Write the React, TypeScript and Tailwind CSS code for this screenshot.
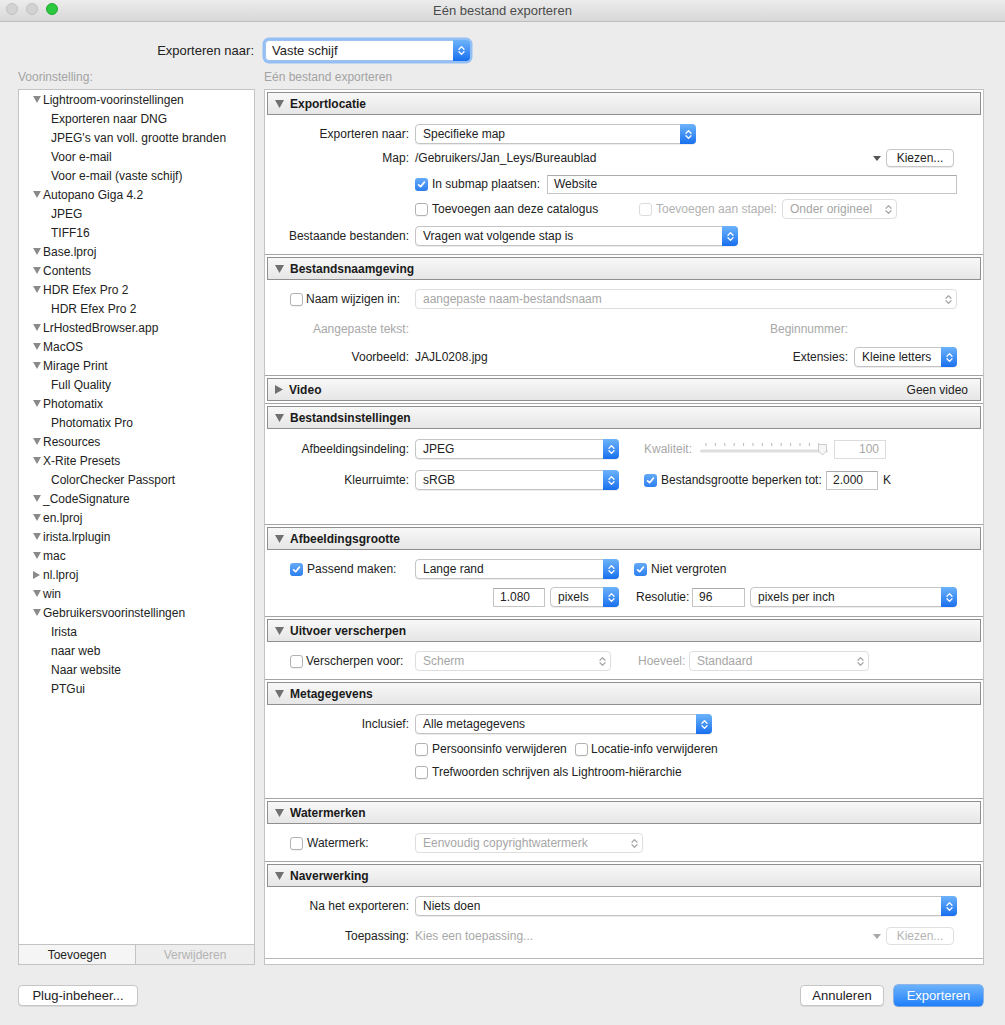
import React from 'react';

const L = 'w-[144px] shrink-0 text-right';

function Chevrons({ color }: { color: string }) {
  return (
    <svg width="7" height="11" viewBox="0 0 7 11">
      <path d="M1 4.2 L3.5 1.6 L6 4.2 M1 6.8 L3.5 9.4 L6 6.8" stroke={color} strokeWidth="1.3" fill="none" strokeLinecap="round" strokeLinejoin="round" />
    </svg>
  );
}

function Select({ w, text, disabled }: { w: string; text: string; disabled?: boolean }) {
  return (
    <div
      className={`${w} h-[20px] shrink-0 flex items-stretch rounded-[4px] border bg-white ${
        disabled ? 'border-[#dedede] text-[#a6a6a6]' : 'border-[#c4c4c4] text-[#222] shadow-[0_1px_0_rgba(0,0,0,0.07)]'
      }`}
    >
      <span className="flex-1 pl-[7px] leading-[18px] truncate">{text}</span>
      {disabled ? (
        <span className="w-[16px] flex items-center justify-center">
          <Chevrons color="#a9a9a9" />
        </span>
      ) : (
        <span className="w-[16px] -my-px -mr-px rounded-r-[4px] bg-linear-to-b from-[#6cb3fb] to-[#166fee] flex items-center justify-center">
          <Chevrons color="#fff" />
        </span>
      )}
    </div>
  );
}

function Check({ checked, disabled }: { checked?: boolean; disabled?: boolean }) {
  if (checked)
    return (
      <span className="w-[13px] h-[13px] shrink-0 rounded-[3px] bg-linear-to-b from-[#63aaf8] to-[#2c7ff0] flex items-center justify-center">
        <svg width="9" height="9" viewBox="0 0 9 9">
          <path d="M1.6 4.8 L3.6 6.7 L7.4 2.1" stroke="#fff" strokeWidth="1.7" fill="none" strokeLinecap="round" strokeLinejoin="round" />
        </svg>
      </span>
    );
  return (
    <span
      className={`w-[13px] h-[13px] shrink-0 rounded-[3px] border bg-white ${
        disabled ? 'border-[#dcdcdc]' : 'border-[#b2b2b2] shadow-[0_1px_0_rgba(0,0,0,0.05)]'
      }`}
    />
  );
}

function Field({ w, value, disabled }: { w: string; value: string; disabled?: boolean }) {
  return (
    <div
      className={`${w} h-[19px] shrink-0 border bg-white px-[6px] leading-[17px] ${
        disabled ? 'border-[#dcdcdc] text-[#a8a8a8] text-right' : 'border-[#c4c4c4] border-t-[#ababab] text-[#222]'
      }`}
    >
      {value}
    </div>
  );
}

function Btn({ w, children, disabled, primary, big }: { w: string; children: React.ReactNode; disabled?: boolean; primary?: boolean; big?: boolean }) {
  const base = `${w} shrink-0 rounded-[4px] flex items-center justify-center`;
  if (primary)
    return (
      <div className={`${base} h-[21px] text-[13px] text-white bg-linear-to-b from-[#6ab2fb] to-[#1c80fa] shadow-[0_0_0_0.5px_#2f7fe8,0_1px_1px_rgba(0,0,0,0.15)]`}>
        {children}
      </div>
    );
  return (
    <div
      className={`${base} ${big ? 'h-[21px] text-[13px]' : 'h-[18px]'} bg-white border ${
        disabled ? 'border-[#e0e0e0] text-[#b4b4b4]' : 'border-[#c6c6c6] text-[#222] shadow-[0_1px_0_rgba(0,0,0,0.08)]'
      }`}
    >
      {children}
    </div>
  );
}

function SmallTri({ gray }: { gray?: boolean }) {
  return (
    <svg width="8" height="5" viewBox="0 0 8 5">
      <polygon points="0,0 8,0 4,5" fill={gray ? '#a8a8a8' : '#555'} />
    </svg>
  );
}

function Tri({ open, size = 9, color = '#707070' }: { open: boolean; size?: number; color?: string }) {
  return open ? (
    <svg width={size} height={size - 1} viewBox="0 0 9 8">
      <polygon points="0,0 9,0 4.5,8" fill={color} />
    </svg>
  ) : (
    <svg width={size - 1} height={size} viewBox="0 0 8 9">
      <polygon points="0,0 8,4.5 0,9" fill={color} />
    </svg>
  );
}

function Section({
  title,
  first,
  open = true,
  extra,
  h,
  last,
  children,
}: {
  title: string;
  first?: boolean;
  open?: boolean;
  extra?: string;
  h?: string;
  last?: boolean;
  children?: React.ReactNode;
}) {
  return (
    <div className={`${first ? '' : 'border-t border-[#a4a4a4]'} pt-[2px] shrink-0 ${last ? 'flex-1 flex flex-col' : ''}`}>
      <div className="mx-[2px] h-[23px] shrink-0 border border-[#8f8f8f] bg-linear-to-b from-[#f8f8f8] to-[#e6e6e6] flex items-center pl-[7px] pr-[12px]">
        <Tri open={open} />
        <span className="ml-[6px] font-bold text-[#1a1a1a]">{title}</span>
        {extra && <span className="ml-auto text-[#222]">{extra}</span>}
      </div>
      <div className={`flex flex-col ${last ? 'flex-1 border-b border-[#b8b8b8] mb-[5px]' : h}`}>{children}</div>
    </div>
  );
}

const tree: [string, number][] = [
  ['Lightroom-voorinstellingen', 1],
  ['Exporteren naar DNG', 0],
  ["JPEG's van voll. grootte branden", 0],
  ['Voor e-mail', 0],
  ['Voor e-mail (vaste schijf)', 0],
  ['Autopano Giga 4.2', 1],
  ['JPEG', 0],
  ['TIFF16', 0],
  ['Base.lproj', 1],
  ['Contents', 1],
  ['HDR Efex Pro 2', 1],
  ['HDR Efex Pro 2', 0],
  ['LrHostedBrowser.app', 1],
  ['MacOS', 1],
  ['Mirage Print', 1],
  ['Full Quality', 0],
  ['Photomatix', 1],
  ['Photomatix Pro', 0],
  ['Resources', 1],
  ['X-Rite Presets', 1],
  ['ColorChecker Passport', 0],
  ['_CodeSignature', 1],
  ['en.lproj', 1],
  ['irista.lrplugin', 1],
  ['mac', 1],
  ['nl.lproj', 2],
  ['win', 1],
  ['Gebruikersvoorinstellingen', 1],
  ['Irista', 0],
  ['naar web', 0],
  ['Naar website', 0],
  ['PTGui', 0],
];

export default function App() {
  return (
    <div className="w-[1005px] h-[1025px] overflow-hidden bg-[#ececec] text-[12px] text-[#222] font-['Liberation_Sans',Arial,sans-serif]">
      {/* titelbalk */}
      <div className="relative h-[22px] border-b border-[#bdbdbd] bg-linear-to-b from-[#ececec] to-[#d8d8d8] flex items-center justify-center">
        <div className="absolute left-[6px] top-[3px] flex gap-[8px]">
          <span className="w-[12px] h-[12px] rounded-full bg-[#d2d2d2] border border-[#c2c2c2]" />
          <span className="w-[12px] h-[12px] rounded-full bg-[#d2d2d2] border border-[#c2c2c2]" />
          <span className="w-[12px] h-[12px] rounded-full bg-[#2bc840] border border-[#20a833]" />
        </div>
        <span className="text-[13px] text-[#4b4b4b]">Eén bestand exporteren</span>
      </div>

      {/* exporteren naar */}
      <div className="flex items-center h-[21px] mt-[18px]">
        <span className="w-[254px] text-right text-[13px]">Exporteren naar:</span>
        <div className="ml-[11px] w-[205px] h-[21px] flex items-stretch rounded-[4px] border border-[#9fc2ef] bg-white shadow-[0_0_0_2.5px_#94bff4]">
          <span className="flex-1 pl-[6px] text-[13px] leading-[19px]">Vaste schijf</span>
          <span className="w-[17px] -my-px -mr-px rounded-r-[4px] bg-linear-to-b from-[#6cb3fb] to-[#166fee] flex items-center justify-center">
            <Chevrons color="#fff" />
          </span>
        </div>
      </div>

      <div className="flex h-[14px] mt-[9px] leading-[14px] text-[#a3a3a3]">
        <span className="ml-[18px] w-[246px]">Voorinstelling:</span>
        <span>Eén bestand exporteren</span>
      </div>

      {/* hoofdgedeelte */}
      <div className="flex mt-[5px] pl-[18px] h-[876px]">
        {/* voorinstellingen */}
        <div className="w-[237px] border border-[#c3c3c3] bg-white flex flex-col">
          <div className="flex-1">
            {tree.map(([name, kind], i) => (
              <div key={i} className={`h-[19px] flex items-center ${kind ? 'pl-[14px]' : 'pl-[32px]'}`}>
                {kind > 0 && (
                  <span className="w-[10px] flex items-center">
                    <Tri open={kind === 1} size={8} color="#8a8a8a" />
                  </span>
                )}
                <span>{name}</span>
              </div>
            ))}
          </div>
          <div className="h-[20px] border-t border-[#c3c3c3] flex">
            <div className="w-[117px] border-r border-[#c3c3c3] bg-[#f5f5f5] flex items-center justify-center">Toevoegen</div>
            <div className="flex-1 bg-[#ededed] text-[#b3b3b3] flex items-center justify-center">Verwijderen</div>
          </div>
        </div>

        {/* instellingen */}
        <div className="ml-[9px] w-[720px] border border-[#c3c3c3] bg-white flex flex-col">
          <Section title="Exportlocatie" first h="h-[139px]">
            <div className="flex items-center h-[20px] mt-[9px]">
              <span className={L}>Exporteren naar:</span>
              <span className="ml-[6px]">
                <Select w="w-[281px]" text="Specifieke map" />
              </span>
            </div>
            <div className="flex items-center h-[20px] mt-[4px] pr-[29px]">
              <span className={L}>Map:</span>
              <span className="ml-[6px]">/Gebruikers/Jan_Leys/Bureaublad</span>
              <span className="ml-auto flex">
                <SmallTri />
              </span>
              <span className="ml-[5px]">
                <Btn w="w-[68px]">Kiezen...</Btn>
              </span>
            </div>
            <div className="flex items-center h-[20px] mt-[6px]">
              <span className="w-[150px] shrink-0" />
              <Check checked />
              <span className="ml-[4px] w-[115px] shrink-0">In submap plaatsen:</span>
              <Field w="w-[410px]" value="Website" />
            </div>
            <div className="flex items-center h-[20px] mt-[5px]">
              <span className="w-[150px] shrink-0" />
              <Check />
              <span className="ml-[4px] w-[207px] shrink-0">Toevoegen aan deze catalogus</span>
              <Check disabled />
              <span className="ml-[4px] w-[126px] shrink-0 text-[#b2b2b2]">Toevoegen aan stapel:</span>
              <Select w="w-[115px]" text="Onder origineel" disabled />
            </div>
            <div className="flex items-center h-[20px] mt-[7px]">
              <span className={L}>Bestaande bestanden:</span>
              <span className="ml-[6px]">
                <Select w="w-[323px]" text="Vragen wat volgende stap is" />
              </span>
            </div>
          </Section>

          <Section title="Bestandsnaamgeving" h="h-[95px]">
            <div className="flex items-center h-[20px] mt-[9px] pl-[25px]">
              <Check />
              <span className="ml-[3px] w-[109px] shrink-0">Naam wijzigen in:</span>
              <Select w="w-[542px]" text="aangepaste naam-bestandsnaam" disabled />
            </div>
            <div className="flex items-center h-[20px] mt-[10px] text-[#a8a8a8]">
              <span className={L}>Aangepaste tekst:</span>
              <span className="ml-[6px] w-[433px] text-right">Beginnummer:</span>
            </div>
            <div className="flex items-center h-[20px] mt-[8px]">
              <span className={L}>Voorbeeld:</span>
              <span className="ml-[6px] w-[433px] flex justify-between">
                <span>JAJL0208.jpg</span>
                <span>Extensies:</span>
              </span>
              <span className="ml-[6px]">
                <Select w="w-[103px]" text="Kleine letters" />
              </span>
            </div>
          </Section>

          <Section title="Video" open={false} extra="Geen video" h="h-[2px]" />

          <Section title="Bestandsinstellingen" h="h-[95px]">
            <div className="flex items-center h-[20px] mt-[10px]">
              <span className={L}>Afbeeldingsindeling:</span>
              <span className="ml-[6px]">
                <Select w="w-[204px]" text="JPEG" />
              </span>
              <span className="ml-[25px] w-[56px] shrink-0 text-[#a8a8a8]">Kwaliteit:</span>
              <svg width="128" height="16" viewBox="0 0 128 16" className="shrink-0">
                {Array.from({ length: 13 }).map((_, i) => (
                  <line key={i} x1={6 + i * 9.4} y1="2" x2={6 + i * 9.4} y2="5" stroke="#b9b9b9" strokeWidth="1" />
                ))}
                <rect x="0" y="8.5" width="128" height="3" rx="1.5" fill="#dedede" />
                <path d="M118.5 3.5 H126.5 V10 L122.5 14 L118.5 10 Z" fill="#f6f6f6" stroke="#cdcdcd" />
              </svg>
              <span className="ml-[6px]">
                <Field w="w-[52px]" value="100" disabled />
              </span>
            </div>
            <div className="flex items-center h-[20px] mt-[11px]">
              <span className={L}>Kleurruimte:</span>
              <span className="ml-[6px]">
                <Select w="w-[204px]" text="sRGB" />
              </span>
              <span className="ml-[25px] flex">
                <Check checked />
              </span>
              <span className="ml-[4px] w-[165px] shrink-0">Bestandsgrootte beperken tot:</span>
              <Field w="w-[52px]" value="2.000" />
              <span className="ml-[5px]">K</span>
            </div>
          </Section>

          <Section title="Afbeeldingsgrootte" h="h-[66px]">
            <div className="flex items-center h-[20px] mt-[9px] pl-[25px]">
              <Check checked />
              <span className="ml-[4px] w-[108px] shrink-0">Passend maken:</span>
              <Select w="w-[204px]" text="Lange rand" />
              <span className="ml-[15px] flex">
                <Check checked />
              </span>
              <span className="ml-[4px]">Niet vergroten</span>
            </div>
            <div className="flex items-center h-[20px] mt-[8px]">
              <span className="w-[228px] shrink-0" />
              <Field w="w-[52px]" value="1.080" />
              <span className="ml-[5px]">
                <Select w="w-[69px]" text="pixels" />
              </span>
              <span className="ml-[17px] w-[56px] shrink-0">Resolutie:</span>
              <Field w="w-[53px]" value="96" />
              <span className="ml-[5px]">
                <Select w="w-[207px]" text="pixels per inch" />
              </span>
            </div>
          </Section>

          <Section title="Uitvoer verscherpen" h="h-[37px]">
            <div className="flex items-center h-[20px] mt-[9px] pl-[25px]">
              <Check />
              <span className="ml-[3px] w-[109px] shrink-0">Verscherpen voor:</span>
              <Select w="w-[196px]" text="Scherm" disabled />
              <span className="ml-[27px] w-[51px] shrink-0 text-[#a8a8a8]">Hoeveel:</span>
              <Select w="w-[180px]" text="Standaard" disabled />
            </div>
          </Section>

          <Section title="Metagegevens" h="h-[93px]">
            <div className="flex items-center h-[20px] mt-[9px]">
              <span className={L}>Inclusief:</span>
              <span className="ml-[6px]">
                <Select w="w-[297px]" text="Alle metagegevens" />
              </span>
            </div>
            <div className="flex items-center h-[20px] mt-[5px]">
              <span className="w-[150px] shrink-0" />
              <Check />
              <span className="ml-[4px] w-[143px] shrink-0">Persoonsinfo verwijderen</span>
              <Check />
              <span className="ml-[3px]">Locatie-info verwijderen</span>
            </div>
            <div className="flex items-center h-[20px] mt-[3px]">
              <span className="w-[150px] shrink-0" />
              <Check />
              <span className="ml-[4px]">Trefwoorden schrijven als Lightroom-hiërarchie</span>
            </div>
          </Section>

          <Section title="Watermerken" h="h-[37px]">
            <div className="flex items-center h-[20px] mt-[9px] pl-[25px]">
              <Check />
              <span className="ml-[4px] w-[108px] shrink-0">Watermerk:</span>
              <Select w="w-[228px]" text="Eenvoudig copyrightwatermerk" disabled />
            </div>
          </Section>

          <Section title="Naverwerking" last>
            <div className="flex items-center h-[20px] mt-[9px]">
              <span className={L}>Na het exporteren:</span>
              <span className="ml-[6px]">
                <Select w="w-[542px]" text="Niets doen" />
              </span>
            </div>
            <div className="flex items-center h-[20px] mt-[10px] pr-[29px]">
              <span className={L}>Toepassing:</span>
              <span className="ml-[6px] text-[#a8a8a8]">Kies een toepassing...</span>
              <span className="ml-auto flex">
                <SmallTri gray />
              </span>
              <span className="ml-[5px]">
                <Btn w="w-[68px]" disabled>
                  Kiezen...
                </Btn>
              </span>
            </div>
          </Section>
        </div>
      </div>

      {/* knoppen */}
      <div className="flex items-center mt-[20px] pl-[18px] pr-[22px]">
        <Btn w="w-[120px]" big>
          Plug-inbeheer...
        </Btn>
        <span className="ml-auto">
          <Btn w="w-[84px]" big>
            Annuleren
          </Btn>
        </span>
        <span className="ml-[10px]">
          <Btn w="w-[89px]" primary>
            Exporteren
          </Btn>
        </span>
      </div>
    </div>
  );
}
